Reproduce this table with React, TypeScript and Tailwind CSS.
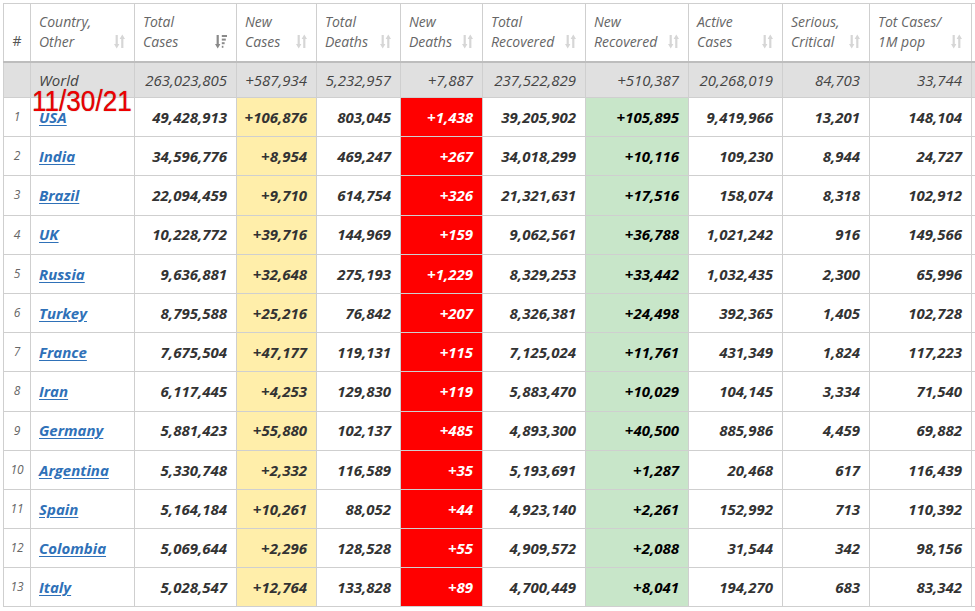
import React from "react";

type Row = {
  n: number;
  country: string;
  total: string;
  newCases: string;
  deaths: string;
  newDeaths: string;
  recovered: string;
  newRecovered: string;
  active: string;
  serious: string;
  perM: string;
};

const raw = `1|USA|49,428,913|+106,876|803,045|+1,438|39,205,902|+105,895|9,419,966|13,201|148,104
2|India|34,596,776|+8,954|469,247|+267|34,018,299|+10,116|109,230|8,944|24,727
3|Brazil|22,094,459|+9,710|614,754|+326|21,321,631|+17,516|158,074|8,318|102,912
4|UK|10,228,772|+39,716|144,969|+159|9,062,561|+36,788|1,021,242|916|149,566
5|Russia|9,636,881|+32,648|275,193|+1,229|8,329,253|+33,442|1,032,435|2,300|65,996
6|Turkey|8,795,588|+25,216|76,842|+207|8,326,381|+24,498|392,365|1,405|102,728
7|France|7,675,504|+47,177|119,131|+115|7,125,024|+11,761|431,349|1,824|117,223
8|Iran|6,117,445|+4,253|129,830|+119|5,883,470|+10,029|104,145|3,334|71,540
9|Germany|5,881,423|+55,880|102,137|+485|4,893,300|+40,500|885,986|4,459|69,882
10|Argentina|5,330,748|+2,332|116,589|+35|5,193,691|+1,287|20,468|617|116,439
11|Spain|5,164,184|+10,261|88,052|+44|4,923,140|+2,261|152,992|713|110,392
12|Colombia|5,069,644|+2,296|128,528|+55|4,909,572|+2,088|31,544|342|98,156
13|Italy|5,028,547|+12,764|133,828|+89|4,700,449|+8,041|194,270|683|83,342`;

const rows: Row[] = raw.split("\n").map((line) => {
  const p = line.split("|");
  return {
    n: Number(p[0]),
    country: p[1],
    total: p[2],
    newCases: p[3],
    deaths: p[4],
    newDeaths: p[5],
    recovered: p[6],
    newRecovered: p[7],
    active: p[8],
    serious: p[9],
    perM: p[10],
  };
});

const headers = [
  ["Country,", "Other"],
  ["Total", "Cases"],
  ["New", "Cases"],
  ["Total", "Deaths"],
  ["New", "Deaths"],
  ["Total", "Recovered"],
  ["New", "Recovered"],
  ["Active", "Cases"],
  ["Serious,", "Critical"],
  ["Tot Cases/", "1M pop"],
];

const widths = [27, 104, 102, 80, 84, 82, 103, 103, 94, 87, 102, 100];

// the two-arrow sort glyph, light grey when the column isn't sorted
function SortIcon() {
  return (
    <svg width="11" height="15" viewBox="0 0 11 15" className="shrink-0">
      <g fill="#d6d6d6">
        <rect x="1.6" y="1" width="2.2" height="10" />
        <polygon points="0,10 5.4,10 2.7,14.5" />
        <rect x="7.2" y="4" width="2.2" height="10" />
        <polygon points="5.6,5 11,5 8.3,0.5" />
      </g>
    </svg>
  );
}

function SortActiveIcon() {
  return (
    <svg width="12" height="15" viewBox="0 0 12 15" className="shrink-0">
      <g fill="#8a8a8a">
        <rect x="1.6" y="1" width="2.2" height="10" />
        <polygon points="0,10 5.4,10 2.7,14.5" />
        <rect x="6.8" y="1" width="5.2" height="2" />
        <rect x="6.8" y="4.6" width="4" height="2" />
        <rect x="6.8" y="8.2" width="2.8" height="2" />
        <rect x="6.8" y="11.8" width="1.6" height="2" />
      </g>
    </svg>
  );
}

const td = "border border-[#cfcfcf] text-right pr-[9px] pl-1 align-middle whitespace-nowrap";

export default function App() {
  return (
    <div
      className="relative w-[975px] h-[611px] overflow-hidden bg-white text-[#333]"
      style={{ fontFamily: '"Open Sans", "Noto Sans", sans-serif' }}
    >
      <div className="pt-[3px] pl-[3px]">
        <table className="table-fixed border-collapse italic text-[15px] w-[1068px]">
          <colgroup>
            {widths.map((w, i) => (
              <col key={i} style={{ width: w }} />
            ))}
          </colgroup>
          <thead>
            <tr className="h-[58px]">
              <th className="border border-[#cfcfcf] border-b-2 border-b-[#bdbdbd] text-[14px] font-normal text-[#555] align-bottom pb-[10px] not-italic">
                #
              </th>
              {headers.map((h, i) => (
                <th
                  key={i}
                  className="border border-[#cfcfcf] border-b-2 border-b-[#bdbdbd] text-left font-normal text-[14px] leading-[20px] text-[#666] pl-2 pr-[9px] align-middle"
                >
                  <div className="flex items-end justify-between">
                    <div>
                      <div>{h[0]}</div>
                      <div>{h[1]}</div>
                    </div>
                    <div className="mb-[3px]">{i === 1 ? <SortActiveIcon /> : <SortIcon />}</div>
                  </div>
                </th>
              ))}
              <th className="border border-[#cfcfcf] border-b-2 border-b-[#bdbdbd]" />
            </tr>
          </thead>
          <tbody>
            <tr className="h-[36px] bg-[#e0e0e0] text-[#444]">
              <td className="border border-[#cfcfcf]" />
              <td className="border border-[#cfcfcf] text-left pl-2">World</td>
              <td className={td}>263,023,805</td>
              <td className={td}>+587,934</td>
              <td className={td}>5,232,957</td>
              <td className={td}>+7,887</td>
              <td className={td}>237,522,829</td>
              <td className={td}>+510,387</td>
              <td className={td}>20,268,019</td>
              <td className={td}>84,703</td>
              <td className={td}>33,744</td>
              <td className="border border-[#cfcfcf]" />
            </tr>
            {rows.map((r) => (
              <tr key={r.n} className="h-[39.2px] font-bold text-[#333]">
                <td className="border border-[#cfcfcf] text-center text-[12px] font-normal text-[#666]">{r.n}</td>
                <td className="border border-[#cfcfcf] text-left pl-2">
                  <a href="#" className="text-[#2f71b8] underline underline-offset-2">
                    {r.country}
                  </a>
                </td>
                <td className={td}>{r.total}</td>
                <td className={td + " bg-[#ffeeaa]"}>{r.newCases}</td>
                <td className={td}>{r.deaths}</td>
                <td className={td + " bg-[#ff0000] text-white"}>{r.newDeaths}</td>
                <td className={td}>{r.recovered}</td>
                <td className={td + " bg-[#c8e6c9] text-black"}>{r.newRecovered}</td>
                <td className={td}>{r.active}</td>
                <td className={td}>{r.serious}</td>
                <td className={td}>{r.perM}</td>
                <td className="border border-[#cfcfcf]" />
              </tr>
            ))}
          </tbody>
        </table>
      </div>
      {/* date stamp pasted over the table */}
      <div
        className="absolute left-[32px] top-[80px] text-[29px] text-[#ee0000] origin-left scale-x-[0.9] [text-shadow:0_0_1px_rgba(60,0,0,0.6)]"
        style={{ fontFamily: '"Liberation Sans", Arial, sans-serif' }}
      >
        11/30/21
      </div>
    </div>
  );
}
